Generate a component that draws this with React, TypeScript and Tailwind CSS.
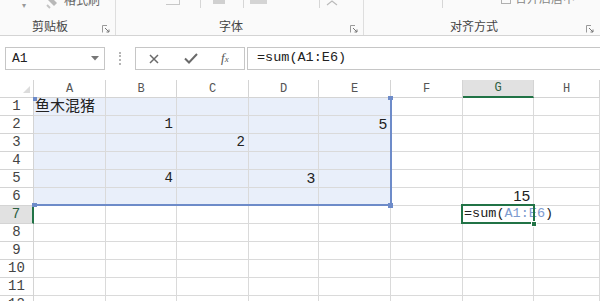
import React from "react";

const COLS = [
  { k: "A", w: "w-[72px]" },
  { k: "B", w: "w-[71px]" },
  { k: "C", w: "w-[72px]" },
  { k: "D", w: "w-[70px]" },
  { k: "E", w: "w-[72px]" },
  { k: "F", w: "w-[72px]" },
  { k: "G", w: "w-[71px]" },
  { k: "H", w: "flex-1" },
];

const mono = "font-['Liberation_Mono',monospace]";
const sans = "font-['Liberation_Sans',Arial,sans-serif]";
const cjk = "font-['Noto_Sans_CJK_SC','Noto_Sans',sans-serif]";

type CellDef = { text: React.ReactNode; align: "left" | "right"; font: string };

const DATA: Record<string, CellDef> = {
  A1: { text: "鱼木混猪", align: "left", font: `${cjk} text-[15px] leading-[18px]` },
  B2: { text: "1", align: "right", font: `${mono} text-[14px]` },
  E2: { text: "5", align: "right", font: `${sans} text-[15px]` },
  C3: { text: "2", align: "right", font: `${mono} text-[14px]` },
  B5: { text: "4", align: "right", font: `${mono} text-[14px]` },
  D5: { text: "3", align: "right", font: `${sans} text-[15px]` },
  G6: { text: "15", align: "right", font: `${sans} text-[15px]` },
};

function Launcher() {
  return (
    <svg width="8" height="8" viewBox="0 0 8 8" className="shrink-0">
      <path d="M0.5 7.5V0.5H5" fill="none" stroke="#9a9a9a" strokeWidth="1" />
      <path d="M3 3L7 7M7 4.5V7H4.5" fill="none" stroke="#777" strokeWidth="1" />
    </svg>
  );
}

function Ribbon() {
  return (
    <div className="h-[36px] flex bg-[#fafafa] border-b border-[#d4d4d4]">
      {/* 剪贴板 */}
      <div className="w-[116px] flex flex-col border-r border-[#dedede]">
        <div className="h-[17px] flex items-start overflow-hidden">
          <span className="ml-[22px] mt-[1px] text-[8px] leading-[8px] text-[#999]">▾</span>
          <svg width="14" height="9" viewBox="0 0 14 9" className="ml-[20px]">
            <path d="M2 0L8 6L11 3L6 -2Z" fill="#b8b8b8" />
            <path d="M1 5L4 8" stroke="#c4c4c4" strokeWidth="2" />
          </svg>
          <span className={`ml-[4px] -mt-[7px] text-[12px] leading-[14px] text-[#666] ${cjk}`}>格式刷</span>
        </div>
        <div className="h-[18px] flex items-center pl-[32px] pr-[5px]">
          <span className={`text-[12px] leading-[12px] text-[#444] ${cjk}`}>剪贴板</span>
          <div className="flex-1" />
          <div className="mt-[6px]">
            <Launcher />
          </div>
        </div>
      </div>
      {/* 字体 */}
      <div className="w-[248px] flex flex-col border-r border-[#dedede]">
        <div className="h-[17px] relative overflow-hidden">
          <div className="flex items-start">
            <div className="ml-[50px] w-[14px] h-[5px] border-b border-r border-[#c8c8c8]" />
            <div className="ml-[20px] w-px h-[8px] bg-[#d6d6d6]" />
            <div className="ml-[12px] w-[12px] h-[4px] bg-[#d0d0d0]" />
            <div className="ml-[18px] w-px h-[8px] bg-[#d6d6d6]" />
            <div className="ml-[6px] w-[17px] h-[4px] bg-[#d4d4d4]" />
            <div className="ml-[52px] w-px h-[8px] bg-[#d6d6d6]" />
            <svg width="12" height="6" viewBox="0 0 12 6" className="ml-[6px]">
              <path d="M1 5L6 1L11 5" fill="none" stroke="#bbb" strokeWidth="1.2" />
            </svg>
          </div>
        </div>
        <div className="h-[18px] flex items-center pl-[103px] pr-[5px]">
          <span className={`text-[12px] leading-[12px] text-[#444] ${cjk}`}>字体</span>
          <div className="flex-1" />
          <div className="mt-[6px]">
            <Launcher />
          </div>
        </div>
      </div>
      {/* 对齐方式 */}
      <div className="flex-1 flex flex-col">
        <div className="h-[17px] overflow-hidden">
          <div className="flex items-start">
            <svg width="12" height="6" viewBox="0 0 12 6" className="ml-[-30px]">
              <path d="M1 5L6 1L11 5" fill="none" stroke="#bbb" strokeWidth="1.2" />
            </svg>
            <div className="ml-[96px] w-px h-[8px] bg-[#d6d6d6]" />
            <div className="ml-[58px] w-[10px] h-[4px] border border-t-0 border-[#b0b0b0]" />
            <span className={`ml-[4px] -mt-[9px] text-[12px] leading-[14px] text-[#888] ${cjk}`}>合并后居中</span>
          </div>
        </div>
        <div className="h-[18px] flex items-center pl-[86px] pr-[6px]">
          <span className={`text-[12px] leading-[12px] text-[#444] ${cjk}`}>对齐方式</span>
          <div className="flex-1" />
          <div className="mt-[6px]">
            <Launcher />
          </div>
        </div>
      </div>
    </div>
  );
}

function FormulaBar() {
  return (
    <div className="h-[44px] pt-[11px] flex items-start bg-white">
      <div className="ml-[5px] w-[100px] h-[23px] border border-[#c6c6c6] flex items-center pl-[6px] pr-[5px]">
        <span className={`${mono} text-[13px] text-[#222]`}>A1</span>
        <div className="flex-1" />
        <svg width="8" height="5" viewBox="0 0 8 5">
          <path d="M0 0H8L4 4.5Z" fill="#777" />
        </svg>
      </div>
      <div className="ml-[14px] mt-[5px] h-[13px] border-l-2 border-dotted border-[#b5b5b5]" />
      <div className="ml-[14px] w-[110px] h-[23px] border border-[#c6c6c6] flex items-center">
        <svg width="10" height="10" viewBox="0 0 10 10" className="ml-[13px]">
          <path d="M1 1L9 9M9 1L1 9" stroke="#6a6a6a" strokeWidth="1.5" />
        </svg>
        <svg width="14" height="11" viewBox="0 0 14 11" className="ml-[25px]">
          <path d="M1 5.5L5 9.5L13 1" fill="none" stroke="#6a6a6a" strokeWidth="2" />
        </svg>
        <span className="ml-[23px] font-['Liberation_Serif',serif] italic text-[13px] leading-[13px] text-[#555]">
          f<span className="text-[9px]">x</span>
        </span>
      </div>
      <div className="ml-[2px] flex-1 h-[23px] border border-r-0 border-[#c6c6c6] flex items-center pl-[9px]">
        <span className={`${mono} text-[13.5px] text-[#222]`}>=sum(A1:E6)</span>
      </div>
    </div>
  );
}

function Grid() {
  const rows = [1, 2, 3, 4, 5, 6, 7, 8, 9, 10, 11, 12];
  return (
    <div className="relative">
      {/* header row */}
      <div className="flex h-[18px]">
        <div className="w-[34px] h-full border-r border-b border-[#d4d4d4] flex items-end justify-end pr-[3px] pb-[4px]">
          <svg width="7" height="7" viewBox="0 0 7 7">
            <path d="M7 0V7H0Z" fill="#dcdcdc" />
          </svg>
        </div>
        {COLS.map((c) => {
          const active = c.k === "G";
          return (
            <div
              key={c.k}
              className={`${c.w} h-full border-r flex items-center justify-center ${mono} text-[12px] ${
                active
                  ? "bg-[#e1e1e1] border-[#d4d4d4] border-b-2 border-b-[#217346] text-[#2c5e40]"
                  : "border-b border-[#d4d4d4] text-[#555]"
              }`}
            >
              {c.k}
            </div>
          );
        })}
      </div>
      {rows.map((r) => (
        <div key={r} className="flex h-[18px]">
          <div
            className={`w-[34px] h-full border-b border-[#d4d4d4] flex items-center justify-center ${mono} text-[14px] ${
              r === 7 ? "bg-[#e1e1e1] border-r-2 border-r-[#217346] text-[#2c5e40]" : "border-r text-[#444]"
            }`}
          >
            {r}
          </div>
          {COLS.map((c, ci) => {
            const id = `${c.k}${r}`;
            const inRange = r <= 6 && ci <= 4;
            const d = DATA[id];
            return (
              <div
                key={id}
                className={`${c.w} h-full border-r border-b border-[#dadada] flex items-end pb-[1px] whitespace-nowrap overflow-visible ${
                  inRange ? "bg-[#e9effa]" : ""
                } ${d ? (d.align === "right" ? "justify-end pr-[3px]" : "justify-start pl-[1px]") : ""}`}
              >
                {d ? <span className={`${d.font} leading-[16px] text-[#222]`}>{d.text}</span> : null}
                {id === "G7" ? (
                  <span className={`${mono} text-[13.5px] leading-[16px] text-[#222] pl-[1px]`}>
                    =sum(<span className="text-[#7d9bcf]">A1:E6</span>)
                  </span>
                ) : null}
              </div>
            );
          })}
        </div>
      ))}

      {/* range highlight border */}
      <div className="absolute left-[33px] top-[17px] w-[359px] h-[109px] border-r-2 border-b-2 border-[#6d8bc9] pointer-events-none" />
      <div className="absolute left-[33px] top-[17px] w-[4px] h-[4px] bg-[#6d8bc9]" />
      <div className="absolute left-[388px] top-[16px] w-[5px] h-[4px] bg-[#6d8bc9]" />
      <div className="absolute left-[32px] top-[123px] w-[5px] h-[4px] bg-[#6d8bc9]" />
      <div className="absolute left-[388px] top-[123px] w-[5px] h-[5px] bg-[#6d8bc9]" />

      {/* active cell */}
      <div className="absolute left-[461px] top-[124px] w-[74px] h-[20px] border-2 border-[#217346] pointer-events-none" />
      <div className="absolute left-[531px] top-[141px] w-[6px] h-[6px] bg-[#217346] border border-white" />
    </div>
  );
}

export default function App() {
  return (
    <div className="w-[600px] h-[301px] overflow-hidden bg-white">
      <Ribbon />
      <FormulaBar />
      <Grid />
    </div>
  );
}
